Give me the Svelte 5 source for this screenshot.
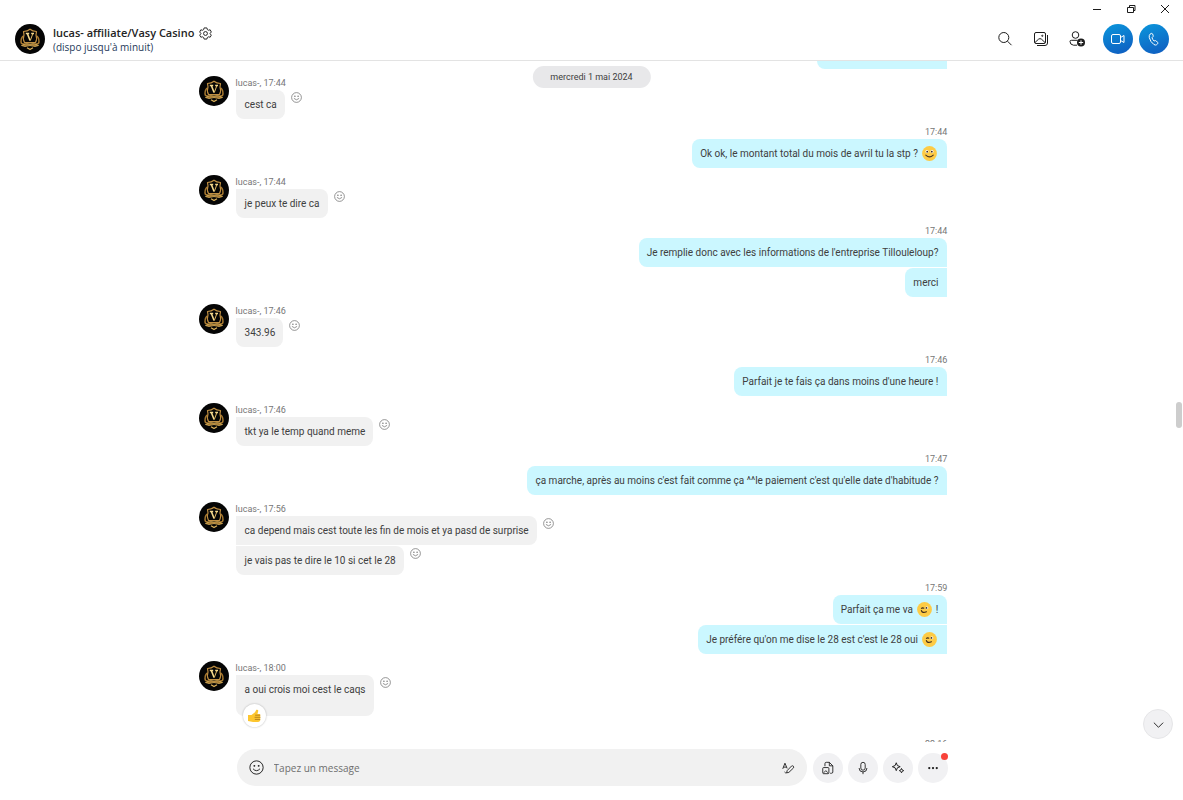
<script>
  const contact = 'lucas-';

  const groups = [
    { mine: true, bubbles: [{ parts: [] }], partial: true },
    { time: '17:44', bubbles: [{ parts: ['cest ca'] }] },
    { mine: true, time: '17:44', bubbles: [{ parts: ['Ok ok, le montant total du mois de avril tu la stp ? ', { emoji: 'smile' }] }] },
    { time: '17:44', bubbles: [{ parts: ['je peux te dire ca'] }] },
    {
      mine: true,
      time: '17:44',
      bubbles: [
        { parts: ["Je remplie donc avec les informations de l'entreprise Tillouleloup?"] },
        { parts: ['merci'] },
      ],
    },
    { time: '17:46', bubbles: [{ parts: ['343.96'] }] },
    { mine: true, time: '17:46', bubbles: [{ parts: ["Parfait je te fais ça dans moins d'une heure !"] }] },
    { time: '17:46', bubbles: [{ parts: ['tkt ya le temp quand meme'] }] },
    { mine: true, time: '17:47', bubbles: [{ parts: ["ça marche, après au moins c'est fait comme ça ^^le paiement c'est qu'elle date d'habitude ?"] }] },
    {
      time: '17:56',
      bubbles: [
        { parts: ['ca depend mais cest toute les fin de mois et ya pasd de surprise'] },
        { parts: ['je vais pas te dire le 10 si cet le 28'] },
      ],
    },
    {
      mine: true,
      time: '17:59',
      bubbles: [
        { parts: ['Parfait ça me va ', { emoji: 'wink' }, ' !'] },
        { parts: ["Je préfére qu'on me dise le 28 est c'est le 28 oui ", { emoji: 'wink' }] },
      ],
    },
    { time: '18:00', bubbles: [{ parts: ['a oui crois moi cest le caqs'], liked: true }] },
    { mine: true, time: '22:16', bubbles: [] },
  ];

  let draft = $state('');
</script>

{#snippet crest()}
  <svg class="avatar" viewBox="0 0 30 30" aria-hidden="true">
    <circle cx="15" cy="15" r="15" fill="#050505" />
    <g fill="none" stroke-linejoin="round">
      <path d="M8.500 7.500 Q12.500 7.500 15 5.200 Q17.500 7.500 21.500 7.500 L21 11 Q22.500 14.500 20.500 18.500 H9.500 Q7.500 14.500 9 11Z" stroke="#c08f42" stroke-width="1.200" />
      <path d="M8 12 Q5 15.500 6.500 19.500 L10.500 20.500M22 12 Q25 15.500 23.500 19.500 L19.500 20.500" stroke="#a5772f" stroke-width="1.500" />
      <path d="M6.500 21.500 Q11 18.500 15 20 Q19 18.500 23.500 21.500 L20 22.500 Q15 20.500 10 22.500Z" stroke="#dcb25a" stroke-width="0.800" fill="#a47731" />
      <path d="M12 23.800 L15 25.500 L18 23.800" stroke="#dcb25a" stroke-width="1.300" />
    </g>
    <path d="M10.800 9.500 H14.200 M16.200 9.500 H19 M12.300 9.500 L15.100 16.500" fill="none" stroke="#f5d98e" stroke-width="1.600" />
    <path d="M17.800 9.800 L15.300 16.500" fill="none" stroke="#e0b862" />
  </svg>
{/snippet}

{#snippet face()}
  <svg viewBox="0 0 16 16" fill="none" stroke="currentColor" aria-hidden="true">
    <circle cx="8" cy="8" r="7.100" />
    <path d="M4.600 9.700 Q8 13.400 11.400 9.700" stroke-linecap="round" />
    <circle cx="5.700" cy="6.200" r="1" fill="currentColor" stroke="none" />
    <circle cx="10.300" cy="6.200" r="1" fill="currentColor" stroke="none" />
  </svg>
{/snippet}

{#snippet emoji(name)}
  <svg class="emoji" viewBox="0 0 15 15" role="img" aria-label={name}>
    <circle cx="7.500" cy="7.500" r="7.400" fill="#fdcb45" />
    {#if name === 'smile'}
      <circle cx="5" cy="5.600" r="1.500" fill="#fff" />
      <circle cx="10" cy="5.600" r="1.500" fill="#fff" />
      <circle cx="5.200" cy="5.700" r="0.900" fill="#3b2a1a" />
      <circle cx="9.800" cy="5.700" r="0.900" fill="#3b2a1a" />
      <path d="M3.800 9.200 Q7.500 12.600 11.200 9.200" fill="none" stroke="#4a3520" stroke-width="1.100" stroke-linecap="round" />
    {:else}
      <path d="M4.200 6.700 Q5.500 5.100 7.200 6.400" fill="none" stroke="#3b2a1a" stroke-width="1.100" />
      <circle cx="9.900" cy="5.900" r="1.400" fill="#fff" />
      <circle cx="9.500" cy="5.900" r="0.900" fill="#3b2a1a" />
      <path d="M4.400 8.600 Q5.200 11.400 9.400 9.800" fill="none" stroke="#3b2a1a" stroke-width="1.200" stroke-linecap="round" />
    {/if}
  </svg>
{/snippet}

<div class="window">
  <header>
    <div class="window-controls">
      <button aria-label="Réduire">
        <svg viewBox="0 0 10 10"><path d="M1 5.500H9" /></svg>
      </button>
      <button aria-label="Restaurer">
        <svg viewBox="0 0 10 10"><path d="M1.500 3.500H7.500V8.500H1.500ZM3.500 3.500V1.500H9V6.500H7.500" /></svg>
      </button>
      <button aria-label="Fermer">
        <svg viewBox="0 0 10 10"><path d="M1 1L9 9M9 1L1 9" /></svg>
      </button>
    </div>

    <div class="title-bar">
      {@render crest()}
      <div class="title">
        <h1>
          lucas- affiliate/Vasy Casino
          <button class="settings" aria-label="Paramètres">
            <svg viewBox="0 0 14 14">
              <path d="M5.500 1 H8.500 L9 2.800 L10.200 3.500 L12 3 L13.300 5.400 L12 6.800 V7.400 L13.300 8.700 L12 11 L10.200 10.600 L9 11.300 L8.500 13 H5.500 L5 11.300 L3.800 10.600 L2 11 L0.700 8.700 L2 7.400 V6.800 L0.700 5.400 L2 3 L3.800 3.500 L5 2.800Z" />
              <circle cx="7" cy="7" r="2.100" />
            </svg>
          </button>
        </h1>
        <p>(dispo jusqu'à minuit)</p>
      </div>

      <div class="actions">
        <button class="plain" aria-label="Rechercher">
          <svg viewBox="0 0 16 16"><circle cx="6.800" cy="6.500" r="5" /><path d="M10.500 10.200L14.500 14.200" /></svg>
        </button>
        <button class="plain" aria-label="Galerie">
          <svg viewBox="0 0 16 16">
            <rect x="1.500" y="1.500" width="11" height="11" rx="1.500" />
            <path d="M2 11.500L5.500 8.200Q7 7 8.500 8.200L12 11.500M14.500 4V12Q14.500 14.500 12 14.500H4" />
            <circle cx="9.300" cy="4.800" r="0.600" />
          </svg>
        </button>
        <button class="plain" aria-label="Ajouter des participants">
          <svg viewBox="0 0 16 16">
            <circle cx="6.500" cy="4" r="3.300" />
            <path d="M8 14.200H4.500Q1 13.800 1 10.500Q1 9.300 2.300 9.300H8.500" />
            <circle cx="12" cy="11.500" r="4" fill="#1c1c1c" stroke="none" />
            <path d="M12 9.300V13.700M9.800 11.500H14.200" stroke="#fff" />
          </svg>
        </button>
        <div class="calls">
          <button class="call" aria-label="Appel vidéo">
            <svg viewBox="0 0 16 16"><rect x="1.500" y="3.500" width="9" height="9" rx="1.500" /><path d="M10.500 6.500L14 4.500V11.500L10.500 9.500" /></svg>
          </button>
          <button class="call" aria-label="Appel audio">
            <svg viewBox="0 0 16 16">
              <path d="M4.100 3.100L5.400 2.400Q6.200 2.200 6.600 3L7.200 4.700Q7.400 5.400 6.700 6L6 6.700Q6.600 8.700 8.100 10L9.100 9.700Q9.800 9.500 10.300 10L11.700 11.500Q12.200 12.200 11.600 12.800L10.700 13.700Q9.500 14.500 7.900 13.500Q4.400 11 3.300 6.700Q2.800 4.300 4.100 3.100Z" />
            </svg>
          </button>
        </div>
      </div>
    </div>
  </header>

  <main>
    <span class="date">mercredi 1 mai 2024</span>

    <div class="messages">
      {#each groups as group}
        <section class="group" class:mine={group.mine}>
          {#if !group.mine}
            {@render crest()}
          {/if}
          <div class="thread">
            {#if !group.partial}
              <p class="meta">{group.mine ? group.time : `${contact}, ${group.time}`}</p>
            {/if}
            {#each group.bubbles as bubble}
              <div class="row">
                <div class="bubble" class:liked={bubble.liked} class:empty={!bubble.parts.length}>
                  <p>{#each bubble.parts as part}{#if part.emoji}{@render emoji(part.emoji)}{:else}{part}{/if}{/each}</p>
                  {#if bubble.liked}
                    <span class="like">
                      <svg viewBox="0 0 14 14" role="img" aria-label="J'aime">
                        <path d="M1 6H4.500L8 3.300L9.300 0.800Q11 0.200 11.300 1.800L10.500 5H12.500Q13.500 5.300 13.200 6.500V11.500Q12.500 13 10.500 13H6L1 12Z" fill="#fdc62f" />
                        <path d="M8.500 6.200H12.800M8 8.300H13M8.200 10.400H12.800" stroke="#b8851c" fill="none" stroke-linecap="round" />
                      </svg>
                    </span>
                  {/if}
                </div>
                {#if !group.mine}
                  <button class="react" aria-label="Réagir">{@render face()}</button>
                {/if}
              </div>
            {/each}
          </div>
        </section>
      {/each}
    </div>

    <span class="thumb"></span>
  </main>

  <footer>
    <div class="composer">
      <button aria-label="Émoticônes">{@render face()}</button>
      <input type="text" placeholder="Tapez un message" aria-label="Tapez un message" bind:value={draft} />
      <button class="format" aria-label="Mise en forme">
        <svg viewBox="0 0 16 16">
          <path d="M2 9L4.500 2.500L7 8.500M2.800 7H6.300" />
          <path d="M6.500 13.500L7 11L12 5.800Q13.200 5 14.200 6Q15 7 14 8.200L9 13Z M6.500 13.500Q5 14 4 12.500" />
        </svg>
      </button>
    </div>
    <button class="tool" aria-label="Fichiers">
      <svg viewBox="0 0 16 16">
        <path d="M4.500 6V3Q4.500 1.500 6 1.500H9.500L13.500 5.500V12.500Q13.500 14 12 14H10.500M9.500 1.500V5.500H13.500" />
        <rect x="2" y="7.500" width="7" height="7" rx="1" />
        <path d="M3 13.500L5.500 11L8 13.500" />
      </svg>
    </button>
    <button class="tool" aria-label="Message vocal">
      <svg viewBox="0 0 16 16"><rect x="5.500" y="1.500" width="5" height="9" rx="2.500" /><path d="M3.500 8Q3.500 12.500 8 12.500Q12.500 12.500 12.500 8M8 12.500V15" /></svg>
    </button>
    <button class="tool" aria-label="Suggestions">
      <svg viewBox="0 0 16 16" stroke-width="1.100">
        <path d="M6 2L7.300 5.200L10.500 6.500L7.300 7.800L6 11L4.700 7.800L1.500 6.500L4.700 5.200Z" />
        <path d="M12 8.500L12.800 10.200L14.500 11L12.800 11.800L12 13.500L11.200 11.800L9.500 11L11.200 10.200Z" />
      </svg>
    </button>
    <button class="tool" aria-label="Plus">
      <svg viewBox="0 0 16 16" class="dots"><circle cx="3" cy="8" r="1.500" /><circle cx="8" cy="8" r="1.500" /><circle cx="13" cy="8" r="1.500" /></svg>
      <span class="badge"></span>
    </button>
    <button class="jump" aria-label="Derniers messages">
      <svg viewBox="0 0 14 14"><path d="M2 5L7 10L12 5" /></svg>
    </button>
  </footer>
</div>

<style>
  :global(body) {
    margin: 0;
    background: #fff;
  }

  .window {
    display: flex;
    flex-direction: column;
    height: 100vh;
    overflow: hidden;
    font-family: 'Open Sans', 'Noto Sans', sans-serif;
    font-size: 10px;
    color: #404040;
    background: #fff;
  }

  h1,
  p {
    margin: 0;
  }

  button {
    display: flex;
    align-items: center;
    justify-content: center;
    flex-shrink: 0;
    padding: 0;
    border: 0;
    background: none;
    color: #1c1c1c;
    cursor: pointer;
  }

  svg {
    display: block;
  }

  button svg {
    fill: none;
    stroke: currentColor;
  }

  .avatar {
    flex-shrink: 0;
    width: 30px;
    height: 30px;
  }

  header {
    flex-shrink: 0;
    border-bottom: 1px solid #e3e3e3;
  }

  .window-controls {
    display: flex;
    justify-content: flex-end;
    height: 18px;
    padding-right: 1px;
  }

  .window-controls button {
    width: 34px;
  }

  .window-controls svg {
    width: 10px;
    height: 10px;
  }

  .title-bar {
    display: flex;
    align-items: center;
    gap: 8px;
    height: 42px;
    padding: 0 14px 0 15px;
  }

  .title {
    padding-top: 2px;
  }

  h1 {
    display: flex;
    align-items: center;
    gap: 5px;
    font-size: 11px;
    line-height: 14px;
    font-weight: 600;
    color: #242424;
  }

  .settings svg {
    width: 13px;
    height: 13px;
  }

  .title p {
    line-height: 14px;
    color: #1f3a5a;
  }

  .actions,
  .calls {
    display: flex;
    align-items: center;
    gap: 6px;
  }

  .actions {
    margin-left: auto;
  }

  .calls {
    margin-left: 5px;
  }

  .plain,
  .call {
    width: 30px;
    height: 30px;
  }

  .plain svg {
    width: 16px;
    height: 16px;
  }

  .call {
    border-radius: 50%;
    background: linear-gradient(160deg, #0b97dc, #0f5abf);
    color: #fff;
  }

  .call svg {
    width: 16px;
    height: 16px;
  }

  main {
    position: relative;
    flex: 1;
    min-height: 0;
    overflow: hidden;
    font-family: Roboto, 'Noto Sans', sans-serif;
  }

  .date {
    position: absolute;
    top: 5px;
    left: 50%;
    transform: translateX(-50%);
    padding: 0 18px;
    border-radius: 11px;
    background: #e8e8ea;
    font-size: 9px;
    line-height: 22px;
    white-space: nowrap;
  }

  /* scrolled so that only the foot of the earlier message shows */
  .messages {
    margin-top: -21px;
    padding: 0 calc(20% - 1px) 0 calc(20% - 38px);
  }

  .group {
    display: flex;
    gap: 7px;
    margin-bottom: 6px;
  }

  .group.mine {
    justify-content: flex-end;
    margin-bottom: 7px;
  }

  .group:has(.liked) {
    margin-bottom: 21px;
  }

  .thread {
    display: flex;
    flex-direction: column;
  }

  .meta {
    font-size: 9px;
    line-height: 14px;
    color: #767676;
  }

  .mine .meta {
    text-align: right;
  }

  .row {
    display: flex;
    align-items: flex-start;
    gap: 6px;
  }

  .row + .row {
    margin-top: 1px;
  }

  .mine .row {
    justify-content: flex-end;
  }

  .bubble {
    position: relative;
    padding: 0 8px 0 9px;
    border-radius: 0 8px 8px 0;
    background: #f1f1f1;
    line-height: 29px;
  }

  .bubble p {
    display: flex;
    align-items: center;
    height: 29px;
    white-space: pre;
  }

  .row:last-child .bubble {
    border-bottom-left-radius: 8px;
  }

  .mine .bubble {
    padding: 0 9px 0 8px;
    border-radius: 8px 0 0 8px;
    background: #cbf7ff;
  }

  .mine .meta + .row .bubble {
    border-top-right-radius: 8px;
  }

  .bubble.empty {
    width: 113px;
  }

  .bubble.liked {
    padding-bottom: 12px;
  }

  .emoji {
    width: 15px;
    height: 15px;
    margin: 0 1px 0 2px;
  }

  .like {
    position: absolute;
    bottom: -11px;
    left: 7px;
    display: flex;
    align-items: center;
    justify-content: center;
    width: 23px;
    height: 23px;
    border-radius: 50%;
    background: #fff;
    box-shadow: 0 0 2px rgba(0, 0, 0, 0.3);
  }

  .like svg {
    width: 14px;
    height: 14px;
  }

  .react {
    margin-top: 2px;
    color: #666;
  }

  .react svg {
    width: 11px;
    height: 11px;
  }

  .thumb {
    position: absolute;
    top: 50%;
    right: 1px;
    width: 6px;
    height: 26px;
    border-radius: 3px;
    background: #cdcdcd;
  }

  footer {
    position: relative;
    display: flex;
    align-items: center;
    gap: 5px;
    flex-shrink: 0;
    padding: 7px calc(20% - 2px) 14px 20%;
  }

  .composer {
    display: flex;
    align-items: center;
    flex: 1;
    gap: 10px;
    height: 37px;
    margin-right: 1px;
    padding: 0 12px;
    border-radius: 19px;
    background: #f1f1f1;
  }

  .composer svg {
    width: 15px;
    height: 15px;
  }

  .composer .format svg {
    width: 14px;
    height: 14px;
  }

  input {
    flex: 1;
    min-width: 0;
    padding: 0;
    border: 0;
    outline: 0;
    background: none;
    font: inherit;
    color: inherit;
  }

  input::placeholder {
    color: #6e6e6e;
    opacity: 1;
  }

  .tool {
    position: relative;
    width: 30px;
    height: 30px;
    border-radius: 50%;
    background: #f1f1f3;
  }

  .tool svg {
    width: 14px;
    height: 14px;
  }

  .tool .dots {
    width: 12px;
    height: 12px;
    fill: currentColor;
    stroke: none;
  }

  .badge {
    position: absolute;
    top: 0;
    right: 0;
    width: 7px;
    height: 7px;
    border-radius: 50%;
    background: #f8423a;
  }

  .jump {
    position: absolute;
    right: 10px;
    bottom: 61px;
    width: 30px;
    height: 30px;
    border: 1px solid #e6e6e8;
    border-radius: 50%;
    background: #f1f1f3;
  }

  .jump svg {
    width: 13px;
    height: 13px;
  }
</style>
